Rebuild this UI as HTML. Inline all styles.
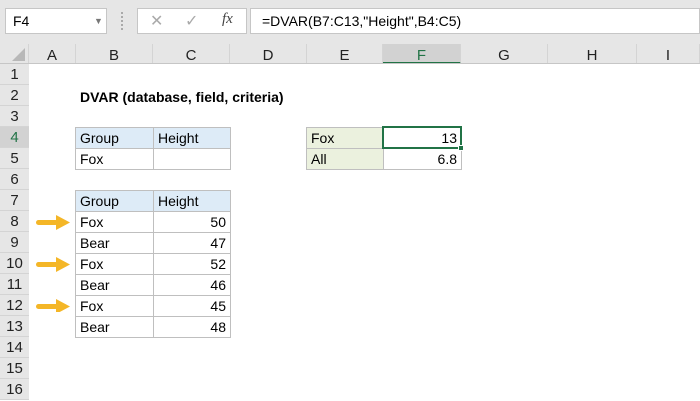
<!DOCTYPE html>
<html><head><style>
body{margin:0;width:700px;height:400px;overflow:hidden;background:#fff;font-family:"Liberation Sans",Calibri,sans-serif;position:relative}
div{position:absolute;box-sizing:border-box}
.t{font-size:14px;line-height:21px;color:#000;white-space:nowrap}
.ch{top:44px;height:20px;border-right:1px solid #d4d4d4;text-align:center;font-size:15px;line-height:24px;color:#222;background:#e6e6e6}
.rh{left:0;width:29px;height:21px;border-bottom:1px solid #d4d4d4;text-align:center;font-size:15px;line-height:22px;color:#222;background:#e6e6e6}
.c{height:22px;border:1px solid #bfbfbf;font-size:14px;line-height:21px;padding:0 4px;white-space:nowrap}
.r{text-align:right}
</style></head><body>
<div style="left:0;top:0;width:700px;height:44px;background:#e6e6e6"></div>
<div style="left:5px;top:8px;width:102px;height:26px;background:#fff;border:1px solid #c6c6c6;font-size:14px;line-height:24px;padding-left:7px">F4<span style="position:absolute;left:88px;top:0;font-size:9px;color:#777">▼</span></div>
<div style="left:121px;top:12px;width:3px;height:18px;border-left:2px dotted #aaa"></div>
<div style="left:137px;top:8px;width:110px;height:26px;background:#fff;border:1px solid #c6c6c6"></div>
<div style="left:150px;top:11px;font-size:16px;color:#aaa">✕</div>
<div style="left:185px;top:11px;font-size:16px;color:#aaa">✓</div>
<div style="left:222px;top:11px;font-size:15px;font-style:italic;font-family:'Liberation Serif',serif;color:#444">fx</div>
<div style="left:250px;top:8px;width:450px;height:26px;background:#fff;border:1px solid #c6c6c6;font-size:14px;line-height:24px;padding-left:11px">=DVAR(B7:C13,"Height",B4:C5)</div>
<div style="left:0;top:44px;width:29px;height:20px;background:#e6e6e6;border-right:1px solid #d4d4d4"></div>
<div style="left:12px;top:48px;width:0;height:0;border-left:13px solid transparent;border-bottom:13px solid #b8b8b8"></div>
<div class="ch" style="left:29px;width:47px">A</div>
<div class="ch" style="left:76px;width:77px">B</div>
<div class="ch" style="left:153px;width:77px">C</div>
<div class="ch" style="left:230px;width:77px">D</div>
<div class="ch" style="left:307px;width:76px">E</div>
<div class="ch" style="left:383px;width:78px;background:#d2d2d2;color:#217346;border-bottom:2px solid #217346">F</div>
<div class="ch" style="left:461px;width:87px">G</div>
<div class="ch" style="left:548px;width:89px">H</div>
<div class="ch" style="left:637px;width:63px">I</div>
<div style="left:0;top:63px;width:700px;height:1px;background:#c6c6c6"></div>
<div style="left:28px;top:64px;width:1px;height:336px;background:#c6c6c6"></div>
<div class="rh" style="top:64px">1</div><div class="rh" style="top:85px">2</div><div class="rh" style="top:106px">3</div>
<div class="rh" style="top:127px;background:#d2d2d2;color:#217346">4</div><div class="rh" style="top:148px">5</div><div class="rh" style="top:169px">6</div>
<div class="rh" style="top:190px">7</div><div class="rh" style="top:211px">8</div><div class="rh" style="top:232px">9</div>
<div class="rh" style="top:253px">10</div><div class="rh" style="top:274px">11</div><div class="rh" style="top:295px">12</div>
<div class="rh" style="top:316px">13</div><div class="rh" style="top:337px">14</div><div class="rh" style="top:358px">15</div><div class="rh" style="top:379px">16</div>
<div class="t" style="left:80px;top:87px;font-weight:bold">DVAR (database, field, criteria)</div>
<div class="c" style="left:75px;top:127px;width:79px;background:#ddebf7">Group</div>
<div class="c" style="left:153px;top:127px;width:78px;background:#ddebf7">Height</div>
<div class="c" style="left:75px;top:148px;width:79px">Fox</div>
<div class="c" style="left:153px;top:148px;width:78px"></div>
<div class="c" style="left:306px;top:127px;width:78px;background:#ebf1de">Fox</div>
<div class="c" style="left:383px;top:127px;width:79px;" ></div>
<div class="c" style="left:306px;top:148px;width:78px;background:#ebf1de">All</div>
<div class="c r" style="left:383px;top:148px;width:79px">6.8</div>
<div class="c r" style="left:382px;top:126px;width:80px;height:23px;border:2px solid #217346;line-height:20px;padding-right:3px">13</div>
<div style="left:458px;top:145px;width:6px;height:6px;background:#217346;border:1px solid #fff"></div>
<div class="c" style="left:75px;top:190px;width:79px;background:#ddebf7">Group</div>
<div class="c" style="left:153px;top:190px;width:78px;background:#ddebf7">Height</div>
<div class="c" style="left:75px;top:211px;width:79px">Fox</div><div class="c r" style="left:153px;top:211px;width:78px">50</div>
<div class="c" style="left:75px;top:232px;width:79px">Bear</div><div class="c r" style="left:153px;top:232px;width:78px">47</div>
<div class="c" style="left:75px;top:253px;width:79px">Fox</div><div class="c r" style="left:153px;top:253px;width:78px">52</div>
<div class="c" style="left:75px;top:274px;width:79px">Bear</div><div class="c r" style="left:153px;top:274px;width:78px">46</div>
<div class="c" style="left:75px;top:295px;width:79px">Fox</div><div class="c r" style="left:153px;top:295px;width:78px">45</div>
<div class="c" style="left:75px;top:316px;width:79px">Bear</div><div class="c r" style="left:153px;top:316px;width:78px">48</div>
<svg style="position:absolute;left:36px;top:212px" width="36" height="100">
<g fill="#f4b627"><rect x="0" y="8" width="22" height="5" rx="2.5"/><polygon points="20,3 34,10.5 20,18"/>
<rect x="0" y="50" width="22" height="5" rx="2.5"/><polygon points="20,45 34,52.5 20,60"/>
<rect x="0" y="92" width="22" height="5" rx="2.5"/><polygon points="20,87 34,94.5 20,102"/></g></svg>
</body></html>
